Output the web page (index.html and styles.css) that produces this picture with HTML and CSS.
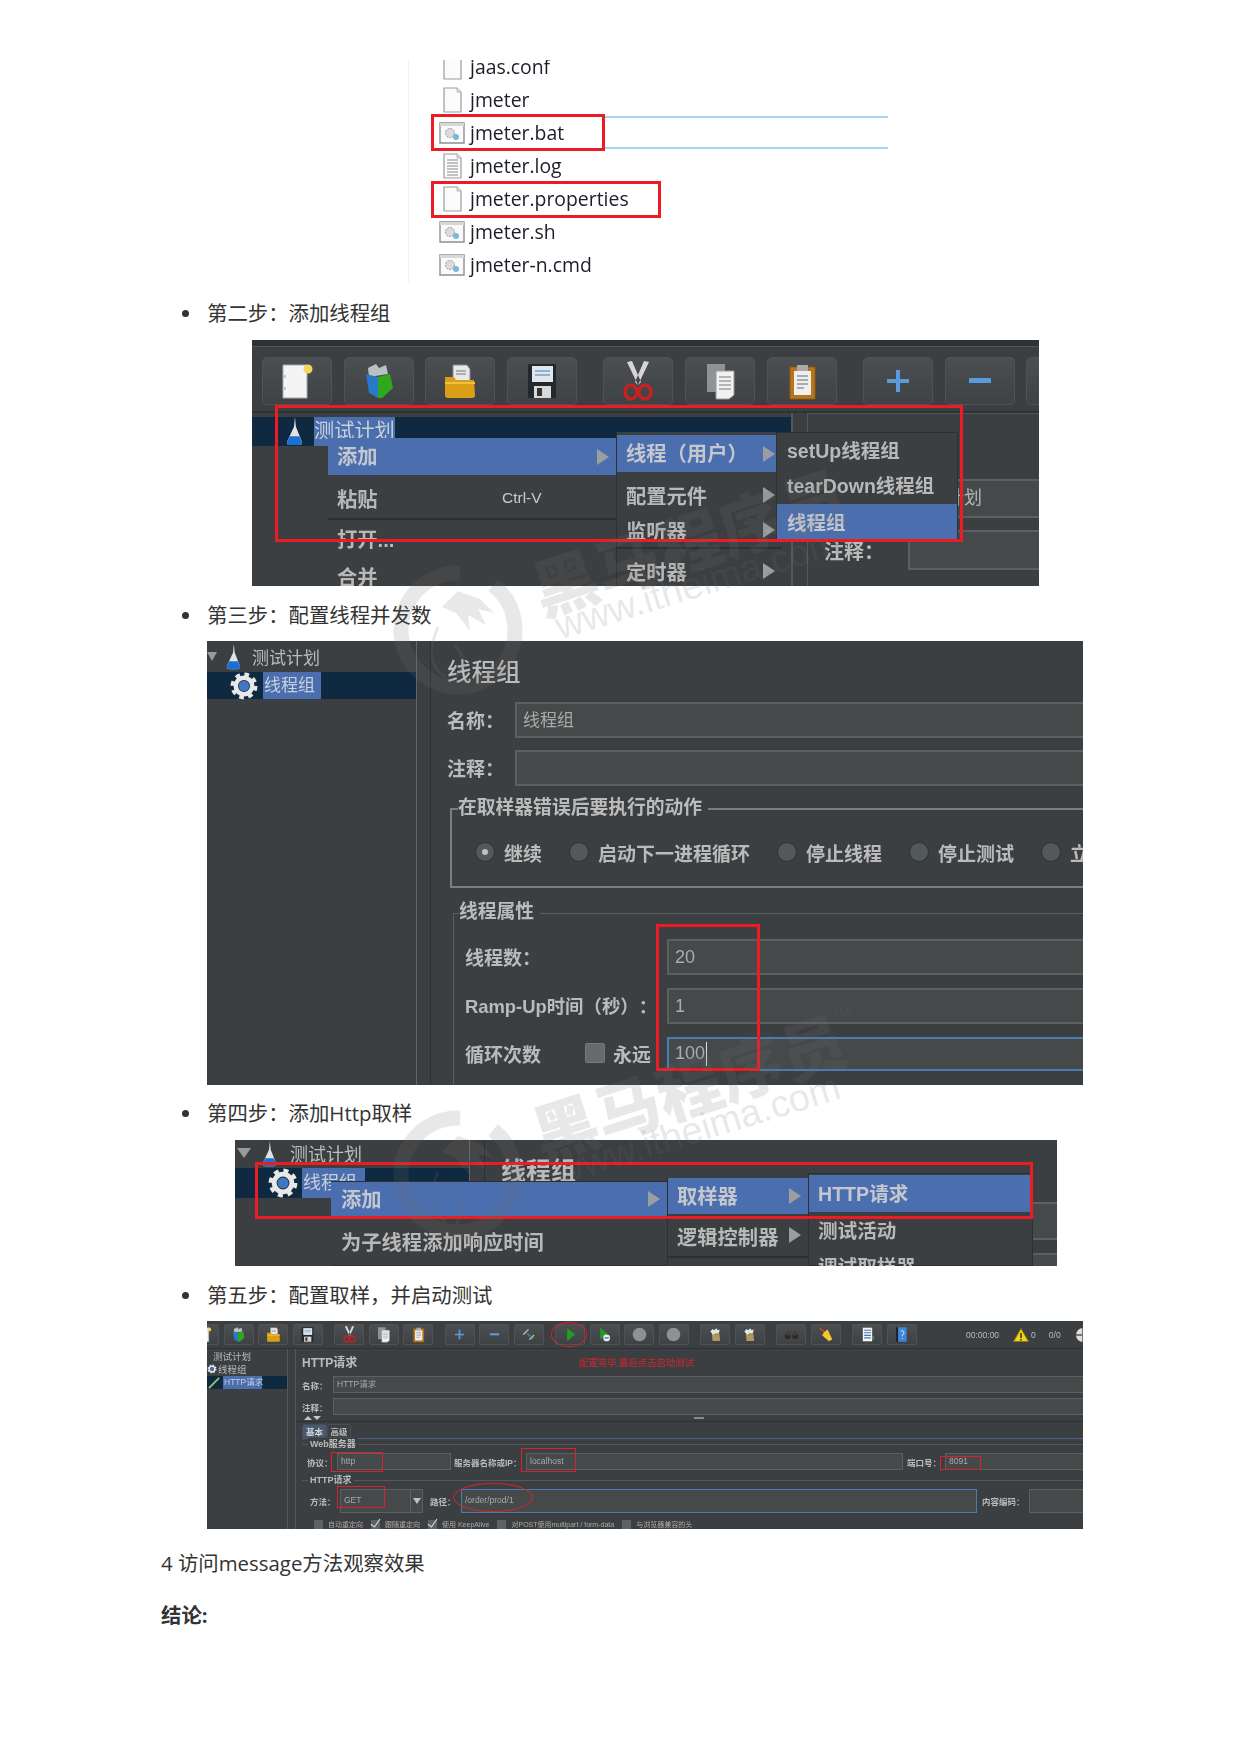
FILE: index.html
```html
<!DOCTYPE html>
<html lang="zh-CN">
<head>
<meta charset="utf-8">
<title>JMeter 测试步骤</title>
<link rel="stylesheet" href="styles.css">
</head>
<body>
<svg class="sprite" aria-hidden="true">
  <symbol id="i-new" viewBox="0 0 40 40"><path d="M6 4h24v33H6z" fill="#f4f4f4" stroke="#aaa"/><path d="M8 14v3M8 26v3" stroke="#999"/><circle cx="31" cy="8" r="4.5" fill="#f3d65a"/></symbol>
  <symbol id="i-tpl" viewBox="0 0 40 40"><path d="M9 7l8-4 3 4 7-3 2 9-19 3z" fill="#b9c0c4"/><path d="M7 13l12 3v21L10 32z" fill="#2a78c8"/><path d="M19 16l12-3 3 14-11 10-4 0z" fill="#2fa81e"/></symbol>
  <symbol id="i-open" viewBox="0 0 40 40"><path d="M13 4h14l3 4v13H13z" fill="#e8e8e8" stroke="#888"/><path d="M16 10h10M16 13h10" stroke="#777"/><path d="M5 16h9l2 3h18l1 15q0 3-3 3H8q-3 0-3-3z" fill="#d9a017"/><path d="M5 22h30" stroke="#f0c040" stroke-width="2"/></symbol>
  <symbol id="i-save" viewBox="0 0 40 40"><path d="M7 3h26q1 0 1 1v32q0 1-1 1H7q-1 0-1-1V4q0-1 1-1z" fill="#23282c"/><path d="M10 5h21v16H10z" fill="#dfe7ee"/><path d="M13 10h15M13 14h15" stroke="#7a9ec0" stroke-width="1.5"/><path d="M12 25h17v12H12z" fill="#d8d8d8"/><path d="M15 27h5v8h-5z" fill="#333"/></symbol>
  <symbol id="i-cut" viewBox="0 0 40 40"><path d="M9 1l11 23 3-3L14 0zM31 1L20 24l-3-3L26 0z" fill="#d6d6d6"/><ellipse cx="13" cy="31" rx="6" ry="7" fill="none" stroke="#c92020" stroke-width="3.4"/><ellipse cx="27" cy="31" rx="6" ry="7" fill="none" stroke="#c92020" stroke-width="3.4"/></symbol>
  <symbol id="i-copy" viewBox="0 0 40 40"><path d="M7 3h18v28H7z" fill="#8f9396"/><path d="M16 10h18v24l-5 4H16z" fill="#f1f1f1" stroke="#999"/><path d="M19 16h12M19 20h12M19 24h12M19 28h12" stroke="#777"/></symbol>
  <symbol id="i-paste" viewBox="0 0 40 40"><path d="M8 6h25v32H8z" fill="#b8761c" stroke="#8b5a14"/><path d="M12 10h17v24H12z" fill="#efefef"/><path d="M15 4h11v6H15z" fill="#aaa"/><path d="M15 15h11M15 19h11M15 23h11M15 27h7" stroke="#666"/></symbol>
  <symbol id="i-plus" viewBox="0 0 40 40"><path d="M18 9h4v22h-4zM9 18h22v4H9z" fill="#5b9bdc"/></symbol>
  <symbol id="i-minus" viewBox="0 0 40 40"><path d="M9 17h22v5H9z" fill="#5b9bdc"/></symbol>
  <symbol id="i-toggle" viewBox="0 0 40 40"><path d="M8 20L20 8M22 32l11-11" stroke="#bfc5c9" stroke-width="3"/><path d="M17 17l7 8" stroke="#3f78c8" stroke-width="4"/><path d="M26 31l6-6" stroke="#6c9a3c" stroke-width="3"/></symbol>
  <symbol id="i-play" viewBox="0 0 40 40"><path d="M12 5l19 15-19 15z" fill="#1fa01f"/></symbol>
  <symbol id="i-playn" viewBox="0 0 40 40"><path d="M10 4l17 14-17 14z" fill="#1fa01f"/><circle cx="25" cy="28" r="8" fill="#eee"/><path d="M20 28h10" stroke="#2a68c8" stroke-width="3"/></symbol>
  <symbol id="i-stop" viewBox="0 0 40 40"><circle cx="20" cy="20" r="16" fill="#909090"/></symbol>
  <symbol id="i-clear" viewBox="0 0 40 40"><path d="M11 13l17-3 3 25H13z" fill="#b59468"/><path d="M8 13l5-6 4 3 5-5 3 5 5-2-2 8-14 4z" fill="#e6e6e6"/><circle cx="21" cy="20" r="3" fill="#5cb82c"/></symbol>
  <symbol id="i-bino" viewBox="0 0 40 40"><circle cx="11" cy="24" r="7" fill="#2b2b2b"/><circle cx="29" cy="24" r="7" fill="#2b2b2b"/><path d="M10 12h7v10h6V12h7l3 10H7z" fill="#4a3f35"/></symbol>
  <symbol id="i-broom" viewBox="0 0 40 40"><path d="M6 4l15 14" stroke="#d8482c" stroke-width="3"/><path d="M17 14l8-6 11 24-8 4-16-14z" fill="#f3c92e"/></symbol>
  <symbol id="i-func" viewBox="0 0 40 40"><path d="M9 4h22v32H9z" fill="#f4f4f4"/><path d="M12 10h16M12 16h16M12 22h16M12 28h16" stroke="#4a78b0" stroke-width="2.5"/><path d="M31 24h4v8h-4z" fill="#4aa040"/></symbol>
  <symbol id="i-help" viewBox="0 0 40 40"><path d="M7 3h5v34H7z" fill="#222"/><path d="M12 3h20v34H12z" fill="#3c86dc"/><path d="M18 13q4-5 7 0t-3 8v3M22 28v2" stroke="#fff" stroke-width="2" fill="none"/></symbol>
  <symbol id="i-flask" viewBox="0 0 20 30"><path d="M11 0l-1 10L3 25q-1 4 3 4h9q4 0 3-4L12 10z" fill="#dfe3e6"/><path d="M5.5 20h10l2.5 5q1 4-3 4H6q-4 0-3-4z" fill="#1d6fd0"/></symbol>
  <symbol id="i-gear" viewBox="0 0 40 40"><circle cx="20" cy="20" r="15" fill="none" stroke="#e8e8e8" stroke-width="6" stroke-dasharray="6 5.8"/><circle cx="20" cy="20" r="11" fill="none" stroke="#e8e8e8" stroke-width="6"/><circle cx="20" cy="20" r="7" fill="#3f78c0"/></symbol>
  <symbol id="i-doc" viewBox="0 0 26 26"><path d="M5 1h13l4 4v20H5z" fill="#fbfbfb" stroke="#9b9b9b" stroke-width="1.2"/><path d="M18 1v4h4" fill="#e6e6e6" stroke="#b5b5b5"/></symbol>
  <symbol id="i-log" viewBox="0 0 26 26"><path d="M5 1h13l4 4v20H5z" fill="#fbfbfb" stroke="#9b9b9b" stroke-width="1.2"/><path d="M18 1v4h4" fill="#e6e6e6" stroke="#b5b5b5"/><path d="M8 7h11M8 10h11M8 13h11M8 16h11M8 19h11M8 22h11" stroke="#8a8a8a"/></symbol>
  <symbol id="i-win" viewBox="0 0 26 22"><path d="M1 1h24v20H1z" fill="#fafafa" stroke="#8f8f8f" stroke-width="1.4"/><path d="M1 1h24v3H1z" fill="#d8d8d8"/><circle cx="11" cy="11" r="4.5" fill="#dcdcdc" stroke="#999" stroke-dasharray="2 1"/><circle cx="17" cy="15" r="3" fill="#7ab8de"/></symbol>
  <symbol id="i-wm" viewBox="0 0 140 130"><circle class="wm-ring" cx="70" cy="65" r="57" fill="none" stroke-width="15" stroke-dasharray="322 36" transform="rotate(-52 70 65)"/><path class="wm-hair" d="M70 26l22 8 14 14-16-4 8 16-18-10 2 16-14-18-14-6z"/><path class="wm-line" d="M50 62q-16 36 8 50M66 80q16 14 2 34" fill="none" stroke-width="3"/></symbol>
</svg>

<main class="doc">
  <div class="fig files">
    <div class="file"><svg class="fi fi-doc"><use href="#i-doc"/></svg><span>jaas.conf</span></div>
    <div class="file"><svg class="fi fi-doc"><use href="#i-doc"/></svg><span>jmeter</span></div>
    <div class="file file-sel"><svg class="fi fi-win"><use href="#i-win"/></svg><span>jmeter.bat</span></div>
    <div class="file"><svg class="fi fi-doc"><use href="#i-log"/></svg><span>jmeter.log</span></div>
    <div class="file"><svg class="fi fi-doc"><use href="#i-doc"/></svg><span>jmeter.properties</span></div>
    <div class="file"><svg class="fi fi-win"><use href="#i-win"/></svg><span>jmeter.sh</span></div>
    <div class="file"><svg class="fi fi-win"><use href="#i-win"/></svg><span>jmeter-n.cmd</span></div>
    <i class="mark f1-a"></i><i class="mark f1-b"></i>
  </div>

  <ul class="steps"><li class="step step-a">第二步：添加线程组</li></ul>

  <div class="fig jm jm2">
    <div class="strip"></div>
    <div class="tools">
      <b class="tb"><svg><use href="#i-new"/></svg></b><b class="tb"><svg><use href="#i-tpl"/></svg></b><b class="tb"><svg><use href="#i-open"/></svg></b><b class="tb"><svg><use href="#i-save"/></svg></b>
      <b class="tb gap"><svg><use href="#i-cut"/></svg></b><b class="tb"><svg><use href="#i-copy"/></svg></b><b class="tb"><svg><use href="#i-paste"/></svg></b>
      <b class="tb gap"><svg><use href="#i-plus"/></svg></b><b class="tb"><svg><use href="#i-minus"/></svg></b><b class="tb"></b>
    </div>
    <div class="split split2">
      <div class="tree tree2">
        <div class="node node2 on"><svg class="flask"><use href="#i-flask"/></svg><span class="lbl">测试计划</span></div>
      </div>
      <div class="panel panel2">
        <div class="frow2"><div class="inp inp2">测试计划</div></div>
        <div class="frow2 frow2b"><span class="lab2">注释：</span><div class="inp inp2b"></div></div>
      </div>
    </div>
    <div class="menu m2a">
      <div class="mi hi h37"><span>添加</span><i class="arr"></i></div>
      <div class="mi r42 sep"><span>粘贴</span><span class="key">Ctrl-V</span></div>
      <div class="mi r36 pt"><span>打开...</span></div>
      <div class="mi r36"><span>合并</span></div>
    </div>
    <div class="menu m2b">
      <div class="mi hi h37"><span>线程（用户）</span><i class="arr"></i></div>
      <div class="mi r36 mt"><span>配置元件</span><i class="arr"></i></div>
      <div class="mi r36 sep"><span>监听器</span><i class="arr"></i></div>
      <div class="mi r36 mt2"><span>定时器</span><i class="arr"></i></div>
    </div>
    <div class="menu m2c">
      <div class="mi r34"><span>setUp线程组</span></div>
      <div class="mi r36"><span>tearDown线程组</span></div>
      <div class="mi hi r36 hi3"><span>线程组</span></div>
    </div>
    <i class="mark f2-a"></i>
  </div>

  <ul class="steps"><li class="step step-b">第三步：配置线程并发数</li></ul>

  <div class="fig jm jm3">
    <div class="split">
      <div class="tree tree3">
        <div class="node node3a"><i class="tri"></i><svg class="flask"><use href="#i-flask"/></svg><span>测试计划</span></div>
        <div class="node node3b on"><svg class="gear"><use href="#i-gear"/></svg><span class="lbl">线程组</span></div>
      </div>
      <div class="bar bar3"></div>
      <div class="panel panel3">
        <div class="ttl3">线程组</div>
        <div class="f3"><span class="lab3">名称：</span><div class="inp">线程组</div></div>
        <div class="f3 f3b"><span class="lab3">注释：</span><div class="inp"></div></div>
        <div class="fs3a">
          <span class="lg3">在取样器错误后要执行的动作</span>
          <div class="radios">
            <span class="rd"><i class="dot on"></i>继续</span>
            <span class="rd"><i class="dot"></i>启动下一进程循环</span>
            <span class="rd rd-wide"><i class="dot"></i>停止线程</span>
            <span class="rd"><i class="dot"></i>停止测试</span>
            <span class="rd"><i class="dot"></i>立即停止</span>
          </div>
        </div>
        <div class="fs3b">
          <span class="lg3">线程属性</span>
          <div class="p3"><span class="pl">线程数：</span><div class="inp inp3">20</div></div>
          <div class="p3"><span class="pl pl-ramp">Ramp-Up时间（秒）：</span><div class="inp inp3">1</div></div>
          <div class="p3 p3c"><span class="pl pl-loop"><span class="plw">循环次数</span><i class="chk"></i><span>永远</span></span><div class="inp inp3 focus">100<i class="caret"></i></div></div>
        </div>
      </div>
    </div>
    <i class="mark f3-a"></i>
  </div>

  <ul class="steps"><li class="step step-c">第四步：添加Http取样</li></ul>

  <div class="fig jm jm4">
    <div class="split">
      <div class="tree tree4">
        <div class="node node4a"><i class="tri tri4"></i><svg class="flask"><use href="#i-flask"/></svg><span>测试计划</span></div>
        <div class="node node4b on"><svg class="gear"><use href="#i-gear"/></svg><span class="lbl">线程组</span></div>
      </div>
      <div class="bar bar4"></div>
      <div class="panel panel4">
        <div class="ttl4">线程组</div>
        <div class="inp inp4a"></div>
        <div class="inp inp4b"></div>
      </div>
    </div>
    <div class="menu m4a">
      <div class="mi hi h34"><span>添加</span><i class="arr"></i></div>
      <div class="mi r50 sep"><span>为子线程添加响应时间</span></div>
    </div>
    <div class="menu m4b">
      <div class="mi hi h36"><span>取样器</span><i class="arr"></i></div>
      <div class="mi r44 sep"><span>逻辑控制器</span><i class="arr"></i></div>
    </div>
    <div class="menu m4c">
      <div class="mi hi h37"><span>HTTP请求</span></div>
      <div class="mi r34"><span>测试活动</span></div>
      <div class="mi r34"><span>调试取样器</span></div>
    </div>
    <i class="mark f4-a"></i>
  </div>

  <ul class="steps"><li class="step step-d">第五步：配置取样，并启动测试</li></ul>

  <div class="fig jm jm5">
    <div class="tools tools5">
      <b class="tb first"><svg><use href="#i-new"/></svg></b><b class="tb"><svg><use href="#i-tpl"/></svg></b><b class="tb"><svg><use href="#i-open"/></svg></b><b class="tb"><svg><use href="#i-save"/></svg></b>
      <b class="tb gap"><svg><use href="#i-cut"/></svg></b><b class="tb"><svg><use href="#i-copy"/></svg></b><b class="tb"><svg><use href="#i-paste"/></svg></b>
      <b class="tb gap"><svg><use href="#i-plus"/></svg></b><b class="tb"><svg><use href="#i-minus"/></svg></b><b class="tb"><svg><use href="#i-toggle"/></svg></b>
      <b class="tb gap"><svg><use href="#i-play"/></svg></b><b class="tb"><svg><use href="#i-playn"/></svg></b><b class="tb"><svg><use href="#i-stop"/></svg></b><b class="tb"><svg><use href="#i-stop"/></svg></b>
      <b class="tb gap"><svg><use href="#i-clear"/></svg></b><b class="tb"><svg><use href="#i-clear"/></svg></b>
      <b class="tb gap"><svg><use href="#i-bino"/></svg></b><b class="tb"><svg><use href="#i-broom"/></svg></b>
      <b class="tb gap"><svg><use href="#i-func"/></svg></b><b class="tb"><svg><use href="#i-help"/></svg></b>
      <div class="status">
        <span>00:00:00</span>
        <svg class="warn" viewBox="0 0 16 14"><path d="M8 .5L15.5 13.5H.5z" fill="#f2d21a" stroke="#8a7a10"/><path d="M7.3 5h1.4v5H7.3zM7.3 11h1.4v1.4H7.3z" fill="#222"/></svg>
        <span class="s0">0</span>
        <span class="s00">0/0</span>
        <svg class="globe" viewBox="0 0 16 16"><circle cx="8" cy="8" r="7" fill="#ddd"/><path d="M8 1v14M1 8h14" stroke="#777" stroke-width="2"/></svg>
      </div>
    </div>
    <div class="split">
      <div class="tree tree5">
        <div class="node n5a"><span>测试计划</span></div>
        <div class="node n5b"><svg class="gear"><use href="#i-gear"/></svg><span>线程组</span></div>
        <div class="node n5c on"><svg class="pen" viewBox="0 0 14 14"><path d="M1 13L12 2" stroke="#9cc06a" stroke-width="2"/></svg><span class="lbl">HTTP请求</span></div>
      </div>
      <div class="panel panel5">
        <div class="head5"><span class="ttl5">HTTP请求</span><span class="notice">配置完毕,最后点击启动测试</span></div>
        <div class="f5"><span class="lab5">名称：</span><div class="inp">HTTP请求</div></div>
        <div class="f5 f5b"><span class="lab5">注释：</span><div class="inp"></div></div>
        <div class="splitter"><i class="up"></i><i class="down"></i><i class="grip"></i></div>
        <div class="tabs"><span class="tab act">基本</span><span class="tab">高级</span></div>
        <div class="fs5 fs5a">
          <span class="lg5">Web服务器</span>
          <div class="r5">
            <span class="l5 w30">协议：</span><div class="inp i-proto">http</div>
            <span class="l5 l-srv">服务器名称或IP：</span><div class="inp i-host">localhost</div>
            <span class="l5 l-port">端口号：</span><div class="inp i-port">8091</div>
          </div>
        </div>
        <div class="fs5 fs5b">
          <span class="lg5">HTTP请求</span>
          <div class="r5 r5b">
            <span class="l5 l-meth">方法：</span><div class="inp i-meth">GET<i class="drop"></i></div>
            <span class="l5 l-path">路径：</span><div class="inp focus i-path">/order/prod/1</div>
            <span class="l5 l-enc">内容编码：</span><div class="inp i-enc"></div>
          </div>
          <div class="opts">
            <span class="op"><i class="cb"></i>自动重定向</span>
            <span class="op"><i class="cb ck"></i>跟随重定向</span>
            <span class="op"><i class="cb ck"></i>使用 KeepAlive</span>
            <span class="op"><i class="cb"></i>对POST使用multipart / form-data</span>
            <span class="op"><i class="cb"></i>与浏览器兼容的头</span>
          </div>
        </div>
      </div>
    </div>
    <i class="mark thin f5-http"></i><i class="mark thin f5-host"></i><i class="mark thin f5-port"></i><i class="mark thin f5-get"></i>
    <i class="mark thin oval f5-play"></i><i class="mark thin oval f5-path"></i>
  </div>

  <p class="para">4 访问message方法观察效果</p>
  <p class="para para-b"><strong>结论:</strong></p>
</main>

<div class="wm wm-1">
  <svg class="wm-logo"><use href="#i-wm"/></svg>
  <span class="wm-title">黑马程序员</span>
  <span class="wm-url">www.itheima.com</span>
</div>
<div class="wm wm-2">
  <svg class="wm-logo"><use href="#i-wm"/></svg>
  <span class="wm-title">黑马程序员</span>
  <span class="wm-tm">TM</span>
  <span class="wm-url">www.itheima.com</span>
</div>
</body>
</html>
```

FILE: styles.css
```css
* { box-sizing: border-box; }
html, body { margin: 0; padding: 0; background: #fff; }
body { position: relative; height: 1754px; overflow: hidden; color: #333;
  font-family: "Open Sans", "Noto Sans CJK SC", sans-serif; }
.sprite { position: absolute; width: 0; height: 0; }
.doc { padding: 60px 0 0 161px; }

/* figures */
.fig { position: relative; overflow: hidden; }
.jm { background: #3c3f41; color: #bbb; filter: blur(.45px); text-spacing-trim: space-all;
  font-family: "Liberation Sans", "Noto Sans CJK SC", sans-serif; font-weight: 500; }
.mark { position: absolute; display: block; border: 3px solid #ed1c24; }
.mark.thin { border-width: 1.2px; border-color: #d8232a; }
.mark.oval { border-radius: 50%; }

/* file list */
.files { margin-left: 247px; width: 480px; height: 223px; border-left: 1px solid #f2f2f2; color: #1d1d28;
  filter: blur(.35px); font-size: 19.4px; }
.file { position: relative; display: flex; align-items: center; height: 33px; top: -10px; }
.file span { position: absolute; left: 61px; line-height: 33px; }
.fi { display: block; }
.fi-doc { width: 26px; height: 26px; margin-left: 30px; }
.fi-win { width: 26px; height: 22px; margin-left: 30px; }
.file-sel::after { content: ""; position: absolute; left: 196px; right: 0; top: 0; bottom: 0;
  border-top: 2px solid #a9d3f3; border-bottom: 2px solid #a9d3f3; }
.f1-a { left: 22px; top: 54px; width: 174px; height: 37px; }
.f1-b { left: 22px; top: 121px; width: 230px; height: 37px; }

/* steps */
.steps { list-style: none; margin: 0; padding: 0; }
.step { position: relative; padding-left: 46px; font-size: 20.4px; line-height: 28px; color: #333; }
.step::before { content: ""; position: absolute; left: 21px; width: 7px; height: 7px; border-radius: 50%; background: #333; }
.step-a { padding-top: 16px; padding-bottom: 13px; }
.step-b { padding-top: 15px; padding-bottom: 12px; }
.step-c { padding-top: 14px; padding-bottom: 13px; }
.step-d { padding-top: 15px; padding-bottom: 12px; }
.step-a::before, .step-b::before, .step-c::before, .step-d::before { margin-top: 11px; }

/* toolbar */
.tools { display: flex; }
.tb { display: flex; align-items: center; justify-content: center; flex: none; border-radius: 5px;
  background: linear-gradient(#4b4f51, #3f4244); border: 1px solid #505355; }
.strip { height: 7px; background: #2f3133; border-bottom: 1px solid #555; }

/* shared pieces */
.split { display: flex; }
.tree { flex: none; }
.node { display: flex; align-items: center; }
.node.on { background: #0f2a40; }
.lbl { background: #4b6eaf; color: #c8d0da; font-weight: 400; }
.panel { flex: 1; min-width: 0; }
.bar { flex: none; border-left: 1px solid #636668; border-right: 1px solid #2d2f31; }
.inp { flex: 1; min-width: 0; background: #45494a; border: 2px solid #5d6061; color: #aaa; white-space: nowrap; overflow: hidden; font-weight: 400; }
.focus { border-color: #4a7cb0; }
.flask { display: block; flex: none; }
.gear { display: block; flex: none; }
.tri { display: block; flex: none; border-style: solid; border-color: #9a9a9a transparent transparent; }

/* menus */
.menu { position: absolute; background: #3c3f41; font-size: 20.3px; font-weight: 700; color: #b8b8b8; }
.mi { display: flex; align-items: center; position: relative; padding-left: 9px; white-space: nowrap; }
.mi.hi { background: #4b6eaf; color: #c4c8ce; padding-bottom: 3px; }
.h34 { height: 34px; } .h36 { height: 36px; } .h37 { height: 37px; }
.r34 { height: 34px; } .r36 { height: 36px; } .r42 { height: 42px; } .r44 { height: 44px; } .r50 { height: 50px; }
.sep { border-bottom: 2px solid #2d2f30; }
.mt { margin-top: 5px; }
.mt2 { margin-top: 4px; }
.arr { position: absolute; right: 7px; top: 50%; margin-top: -8px; width: 0; height: 0;
  border-left: 12px solid #9b9ea0; border-top: 8px solid transparent; border-bottom: 8px solid transparent; }
.key { position: absolute; left: 174px; font-size: 15.5px; font-weight: 400; color: #c6cbd2; }

/* figure 2 */
.jm2 { margin-left: 91px; width: 787px; height: 246px; }
.jm2 .tools { height: 66px; padding: 10px 0 0 10px; gap: 11.6px; border-bottom: 2px solid #2f3133; }
.jm2 .tb { width: 70px; height: 48px; }
.jm2 .tb svg { width: 40px; height: 40px; }
.jm2 .tb.gap { margin-left: 15px; }
.split2 { height: 173px; }
.tree2 { width: 541px; padding-top: 4px; border-right: 2px solid #55585a; }
.node2 { height: 29px; padding-left: 31px; }
.node2 .flask { width: 22px; height: 29px; margin-right: 9px; }
.node2 .lbl { font-size: 20.2px; line-height: 29px; height: 29px; overflow: hidden; }
.panel2 { margin-left: 14px; border-left: 1px solid #55585a; border-top: 1px solid #55585a; padding-top: 65px; }
.frow2 { display: flex; padding-left: 90px; }
.frow2b { padding-left: 16px; margin-top: 12px; align-items: center; }
.inp2 { height: 39px; line-height: 35px; padding-left: 10px; font-size: 18px; color: #b5b5b5; border-right: none; }
.inp2b { height: 40px; margin-left: 24px; border-right: none; }
.lab2 { font-size: 20px; width: 60px; font-weight: 700; }
.m2a { left: 76px; top: 98px; width: 288px; height: 150px; }
.m2a .mi:first-child { margin-bottom: 3px; }
.m2a .pt { height: 38px; padding-bottom: 2px; }
.m2b { left: 364px; top: 92px; width: 166px; height: 160px; padding-top: 3px; border-left: 1px solid #2d2f30; }
.m2c { left: 524px; top: 92px; width: 182px; height: 109px; border: 1px solid #2d2f30; font-size: 19.5px; }
.m2c .mi { padding-left: 10px; padding-bottom: 2px; }
.hi3 { margin-top: 1px; height: 37px; }
.f2-a { left: 23px; top: 65px; width: 688px; height: 137px; }

/* figure 3 */
.jm3 { margin-left: 46px; width: 876px; height: 444px; }
.jm3 .split { height: 444px; }
.tree3 { width: 209px; font-size: 17px; font-weight: 400; }
.node3a { height: 31px; position: relative; }
.tri { border-width: 9px 5px 0; }
.node3a .tri { margin-right: 7px; }
.node3a .flask { width: 18px; height: 26px; margin: 0 10px 0 0; }
.node3b { height: 27px; padding-left: 22px; }
.node3b .gear { width: 30px; height: 30px; margin: 0 4px 0 0; }
.node3b .lbl { height: 27px; line-height: 27px; padding: 0 1px; width: 58px; }
.bar3 { width: 15px; }
.panel3 { padding-left: 16px; overflow: hidden; font-weight: 700; font-size: 19px; }
.ttl3 { height: 61px; padding-top: 15px; font-size: 24.5px; line-height: 34px; font-weight: 500; }
.f3 { display: flex; align-items: center; height: 36px; }
.f3b { margin-top: 12px; }
.lab3 { flex: none; width: 68px; font-size: 19px; padding-bottom: 2px; }
.f3 .inp { height: 36px; line-height: 34px; padding-left: 6px; font-size: 17px; border-right: none; }
.fs3a { position: relative; margin: 22px 0 0 3px; height: 80px; border: 2px solid #7b7e80; border-right: none; }
.lg3 { position: absolute; top: -16px; left: 6px; padding-right: 6px; background: #3c3f41; font-size: 18.8px; line-height: 28px; white-space: nowrap; }
.radios { display: flex; gap: 27px; padding: 30px 0 0 23px; white-space: nowrap; font-size: 19px; }
.rd { display: flex; align-items: center; gap: 9px; height: 24px; }
.rd-wide { margin-left: 0; }
.dot { flex: none; width: 20px; height: 20px; border-radius: 50%; background: #53585a; border: 1px solid #2e3032; position: relative; }
.dot.on::after { content: ""; position: absolute; left: 6px; top: 6px; width: 6px; height: 6px; border-radius: 50%; background: #c0c0c0; }
.fs3b { position: relative; margin: 25px 0 0 6px; height: 180px; border: 1px solid #5a5d5f; border-width: 1px 0 0 1px; padding: 25px 0 0 11px; }
.fs3b .lg3 { left: 5px; font-size: 18.8px; }
.p3 { display: flex; align-items: center; margin-bottom: 13px; }
.pl { flex: none; width: 202px; font-size: 19px; white-space: nowrap; padding-bottom: 2px; }
.pl-ramp { font-size: 18.4px; }
.pl-loop { display: flex; align-items: center; }
.plw { width: 120px; }
.chk { width: 20px; height: 20px; background: #67696b; border: 1px solid #777; border-radius: 2px; margin-right: 8px; }
.inp3 { height: 36px; line-height: 32px; padding-left: 6px; font-size: 18px; color: #aab; border-right: none; }
.p3c .inp3 { height: 34px; line-height: 29px; }
.caret { display: inline-block; width: 1px; height: 24px; background: #ddd; vertical-align: middle; margin-left: 1px; }
.f3-a { left: 449px; top: 283px; width: 104px; height: 147px; }

/* figure 4 */
.jm4 { margin-left: 74px; width: 822px; height: 126px; }
.jm4 .split { height: 126px; }
.tree4 { width: 234px; font-size: 18px; font-weight: 400; }
.node4a { height: 26px; position: relative; margin-bottom: 2px; }
.tri4 { border-width: 10px 7px 0; margin-left: 2px; }
.node4a .flask { width: 18px; height: 26px; margin: 2px 12px 0 9px; }
.node4b { height: 30px; padding-left: 32px; }
.node4b .gear { width: 32px; height: 32px; margin: 0 3px 0 0; }
.node4b .lbl { height: 30px; line-height: 30px; width: 63px; padding-left: 1px; }
.bar4 { width: 16px; }
.panel4 { position: relative; padding: 15px 0 0 16px; }
.ttl4 { font-size: 25px; line-height: 32px; height: 46px; font-weight: 700; }
.inp4a { position: absolute; left: 298px; right: 0; top: 62px; height: 38px; border-right: none; }
.inp4b { position: absolute; left: 298px; right: 0; top: 113px; height: 38px; border-right: none; }
.m4a { left: 96px; top: 41px; width: 336px; height: 85px; border-top: 1px solid #2d2f30; }
.m4a .mi { padding-left: 10px; }
.m4a .h34 { margin-bottom: 1px; }
.m4b { left: 432px; top: 37px; width: 141px; height: 89px; border-left: 1px solid #2d2f30; padding-top: 1px; }
.m4b .sep { padding-top: 1px; }
.m4c { left: 573px; top: 33px; width: 225px; height: 93px; border: 1px solid #2d2f30; padding-top: 1px; font-size: 19.6px; }
.m4c .r34:last-child { padding-top: 5px; }
.f4-a { left: 20px; top: 22px; width: 778px; height: 57px; }

/* figure 5 */
.jm5 { margin-left: 46px; width: 876px; height: 208px; font-size: 8.5px; font-weight: 400; }
.tools5 { height: 28px; padding-top: 3px; gap: 4.5px; border-bottom: 1px solid #2e3032; align-items: flex-start; }
.tools5 .tb { width: 30px; height: 21px; border-radius: 2px; }
.tools5 .tb svg { width: 17px; height: 17px; }
.tools5 .tb.gap { margin-left: 7px; }
.tools5 .first { margin-left: -18px; }
.status { display: flex; align-items: center; height: 21px; margin-left: 45px; font-size: 8.5px; flex: none; white-space: nowrap; }
.warn { width: 16px; height: 14px; margin-left: 14px; }
.s0 { margin-left: 2px; }
.s00 { margin-left: 13px; }
.globe { width: 16px; height: 16px; margin-left: 14px; }
.tree5 { width: 81px; border-right: 1px solid #55585a; font-size: 9.5px; }
.n5a { height: 14px; padding-left: 6px; }
.n5b { height: 12px; padding-left: 0; }
.n5b .gear { width: 10px; height: 10px; margin: 0 1px 0 0; }
.n5c { height: 13px; margin-top: 1px; padding-left: 1px; }
.pen { width: 13px; height: 13px; margin-right: 2px; flex: none; }
.n5c .lbl { line-height: 13px; padding: 0 1px; width: 39px; white-space: nowrap; font-size: 8.5px; }
.jm5 .split { height: 180px; }
.panel5 { margin-left: 7px; padding-left: 6px; border-left: 1px solid #55585a; overflow: hidden; }
.head5 { display: flex; align-items: center; height: 27px; padding-bottom: 2px; }
.ttl5 { font-size: 12px; font-weight: 700; width: 277px; }
.notice { color: #d3262c; font-size: 9.4px; white-space: nowrap; }
.f5 { display: flex; align-items: center; height: 17px; }
.f5b { margin-top: 5px; }
.lab5 { flex: none; width: 31px; font-size: 8.5px; font-weight: 700; }
.f5 .inp { height: 17px; line-height: 14px; padding-left: 3px; border-width: 1px; border-right: none; font-size: 8.5px; }
.splitter { position: relative; height: 7px; border-bottom: 1px solid #2e3032; margin-left: -6px; }
.up { position: absolute; left: 8px; top: 1px; border: 4px solid transparent; border-top: 0; border-bottom-color: #c6c6c6; }
.down { position: absolute; left: 17px; top: 1px; border: 4px solid transparent; border-bottom: 0; border-top-color: #c6c6c6; }
.grip { position: absolute; left: 398px; top: 2px; width: 10px; height: 2px; background: #8a8a8a; }
.tabs { display: flex; height: 17px; padding-top: 2px; border-bottom: 1px solid #49638f; }
.tab { width: 24px; text-align: center; line-height: 15px; border-radius: 3px 3px 0 0; border: 1px solid #4a4d4f; font-weight: 700; }
.tab.act { background: #475a74; color: #d8d8d8; width: 25px; }
.fs5 { position: relative; margin-left: 0; border-top: 1px solid #55585a; }
.fs5a { margin-top: 5px; height: 29px; }
.fs5b { margin-top: 7px; height: 50px; }
.lg5 { position: absolute; left: 6px; top: -7px; padding: 0 2px; background: #3c3f41; line-height: 13px; font-size: 9px; font-weight: 700; }
.r5 { display: flex; align-items: center; height: 17px; margin-top: 8px; }
.r5b { height: 24px; }
.l5 { flex: none; font-weight: 700; white-space: nowrap; }
.w30 { width: 35px; padding-left: 5px; }
.r5 .inp { flex: none; border-width: 1px; line-height: 15px; padding-left: 3px; height: 100%; }
.i-proto { width: 114px; }
.l-srv { width: 72px; margin-left: 3px; }
.i-host { width: 377px; }
.l-port { width: 38px; margin-left: 4px; }
.r5 .i-port { width: 140px; border-right: none; }
.l-meth { width: 38px; padding-left: 8px; }
.r5 .i-meth { position: relative; width: 83px; line-height: 21px; padding-left: 3px; }
.drop { position: absolute; right: 0; top: 0; bottom: 0; width: 12px; border-left: 1px solid #5d6061; }
.drop::after { content: ""; position: absolute; left: 2px; top: 8px; border: 4px solid transparent; border-bottom: 0; border-top: 6px solid #c0c0c0; }
.l-path { width: 31px; margin-left: 7px; padding-left: 0; }
.r5 .i-path { width: 516px; line-height: 21px; padding-left: 3px; }
.l-enc { width: 47px; margin-left: 5px; }
.r5 .i-enc { width: 54px; border-right: none; }
.opts { display: flex; align-items: center; gap: 8px; height: 12px; margin-top: 5px; padding-left: 12px; font-size: 7px; white-space: nowrap; color: #aaa; }
.op { display: flex; align-items: center; gap: 5px; }
.cb { display: block; width: 9px; height: 9px; background: #5d6163; position: relative; }
.cb.ck::after { content: ""; position: absolute; left: 2px; top: -3px; width: 4px; height: 9px; border: solid #ddd; border-width: 0 1.4px 1.4px 0; transform: rotate(35deg); }
.f5-http { left: 124px; top: 131px; width: 52px; height: 20px; }
.f5-host { left: 314px; top: 127px; width: 55px; height: 24px; }
.f5-port { left: 733px; top: 135px; width: 41px; height: 14px; }
.f5-get { left: 130px; top: 165px; width: 48px; height: 22px; }
.f5-play { left: 344px; top: 1px; width: 36px; height: 25px; }
.f5-path { left: 246px; top: 162px; width: 80px; height: 29px; }

/* paragraphs */
.para { margin: 20px 0 0; font-size: 20.4px; line-height: 28px; color: #333; }
.para-b { margin-top: 24px; }
.para strong { font-weight: 700; }

/* watermark, over everything */
.wm { position: absolute; left: 0; width: 1240px; height: 0; pointer-events: none; color: rgba(110,110,110,.16); font-family: "Noto Sans CJK SC", sans-serif; }
.wm-1 { top: 0; }
.wm-2 { top: 545px; }
.wm-logo { position: absolute; left: 388px; top: 565px; width: 140px; height: 130px; }
.wm-ring { stroke: rgba(110,110,110,.16); }
.wm-hair { fill: rgba(110,110,110,.16); }
.wm-line { stroke: rgba(110,110,110,.16); }
.wm-title { position: absolute; left: 546px; top: 548px; font-size: 65px; line-height: 80px; font-weight: 900; white-space: nowrap; transform: rotate(-18deg); transform-origin: left bottom; }
.wm-url { position: absolute; left: 563px; top: 603px; font-family: "Liberation Sans", sans-serif; font-size: 38px; line-height: 46px; white-space: nowrap; transform: rotate(-17deg); transform-origin: left bottom; }
.wm-tm { position: absolute; left: 832px; top: 462px; font-family: "Liberation Sans", sans-serif; font-size: 13px; line-height: 14px; transform: rotate(-18deg); }
```
